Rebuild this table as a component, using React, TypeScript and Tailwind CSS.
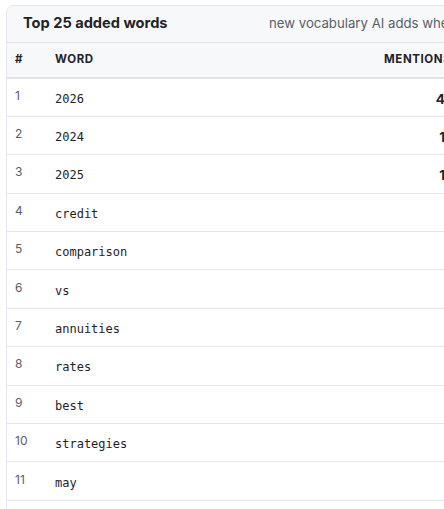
import React from "react";

const rows: [number, string, string][] = [
  [1, "2026", "4"],
  [2, "2024", "1"],
  [3, "2025", "1"],
  [4, "credit", ""],
  [5, "comparison", ""],
  [6, "vs", ""],
  [7, "annuities", ""],
  [8, "rates", ""],
  [9, "best", ""],
  [10, "strategies", ""],
  [11, "may", ""],
];

export default function App() {
  return (
    <div className="w-[444px] h-[509px] overflow-hidden bg-white" style={{ fontFamily: "Inter, 'Liberation Sans', sans-serif" }}>
      <div className="ml-[6px] mt-[5px] w-[461px] rounded-t-lg border border-[#e3e6ea] overflow-hidden">
        <div className="h-[37px] flex items-center bg-[#f7f8fa] border-b border-[#e1e4e8] pl-4">
          <div className="w-[246px] shrink-0 text-[14.6px] font-bold text-[#1f2328]">Top 25 added words</div>
          <div className="text-[13.2px] text-[#57606a] whitespace-nowrap">new vocabulary AI adds when rewriting</div>
        </div>
        <table className="w-full border-collapse table-fixed">
          <colgroup>
            <col className="w-[40px]" />
            <col />
            <col className="w-[90px]" />
          </colgroup>
          <thead>
            <tr className="h-[35px] bg-[#f7f8fa] border-b-2 border-[#dfe2e6]">
              <th className="pl-2 text-left text-[11.5px] font-bold text-[#1f2328] tracking-[0.6px]">#</th>
              <th className="pl-2 text-left text-[11.5px] font-bold text-[#1f2328] tracking-[0.6px]">WORD</th>
              <th className="pl-2 text-left text-[11.5px] font-bold text-[#1f2328] tracking-[0.6px] whitespace-nowrap">MENTIONS</th>
            </tr>
          </thead>
          <tbody>
            {rows.map(([n, w, m]) => (
              <tr key={n} className="h-[38.4px] border-b border-[#e3e6ea]">
                <td className="pl-2 pt-[3px] text-[12px] text-[#57606a] align-middle"><span className="relative top-[-3px]">{n}</span></td>
                <td className="pl-2 pt-[3px] text-[12px] text-[#1f2328]" style={{ fontFamily: "'DejaVu Sans Mono', monospace" }}>{w}</td>
                <td className="pr-[21px] pt-[3px] text-right text-[13.5px] font-bold text-[#1f2328]">{m}</td>
              </tr>
            ))}
            <tr className="h-[38.4px]">
              <td colSpan={3}></td>
            </tr>
          </tbody>
        </table>
      </div>
    </div>
  );
}
